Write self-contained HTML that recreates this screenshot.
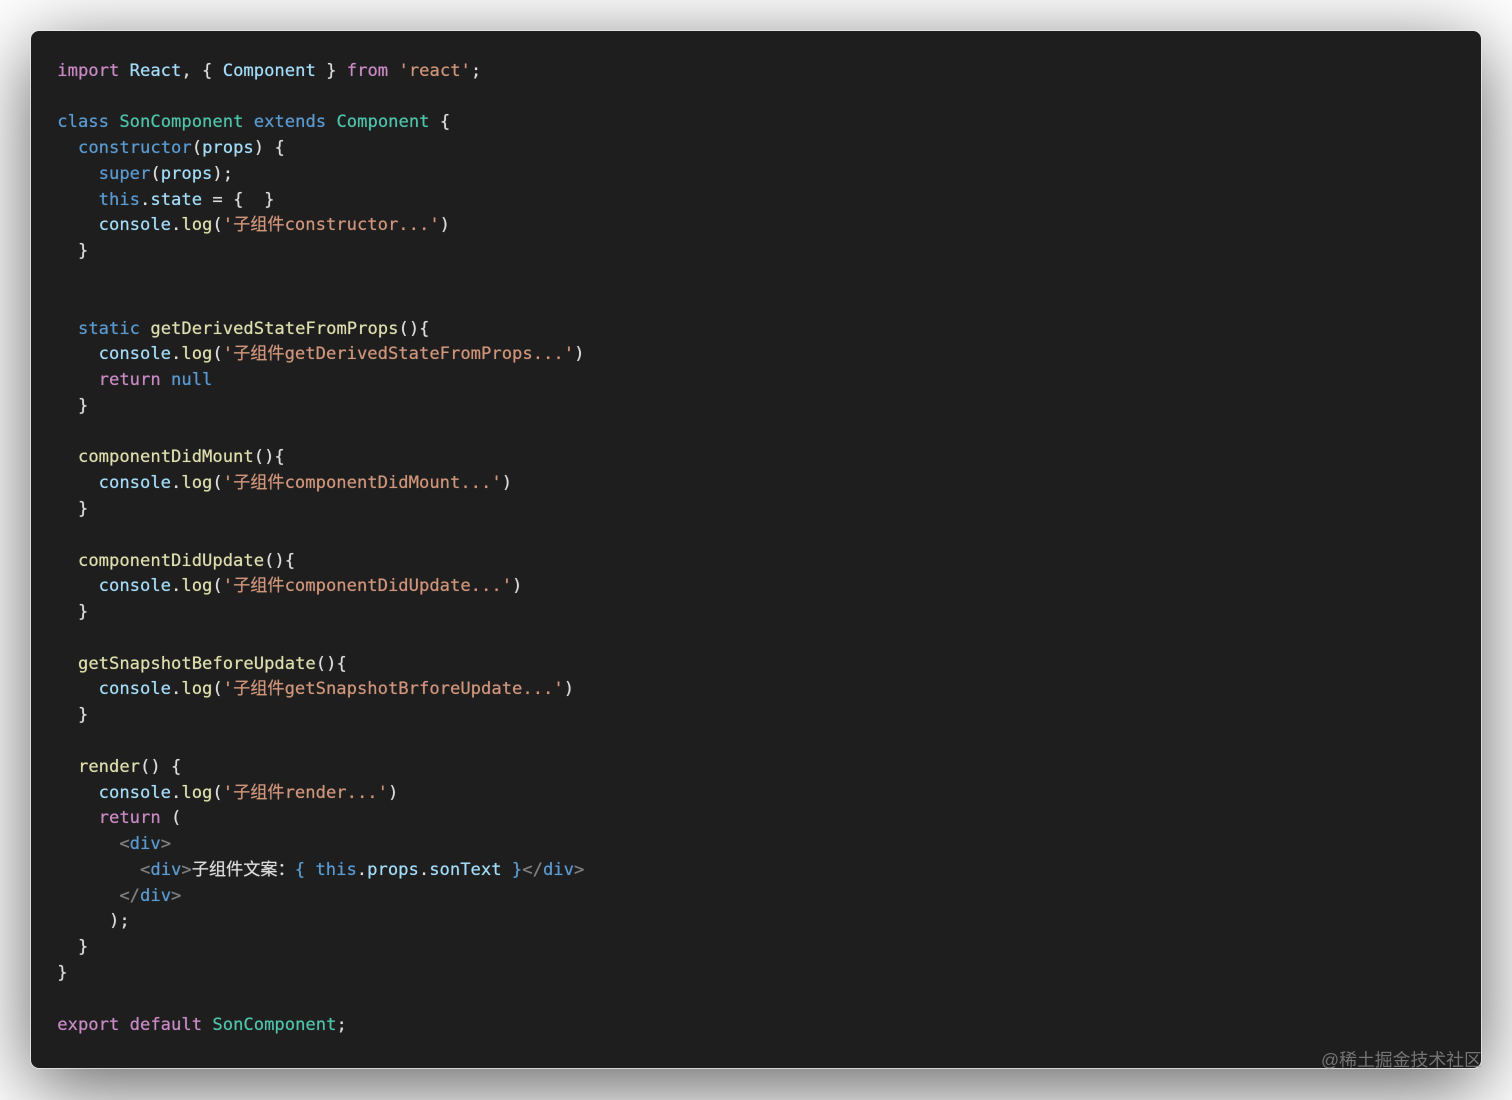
<!DOCTYPE html>
<html lang="zh-CN">
<head>
<meta charset="utf-8">
<title>SonComponent</title>
<style>
html,body{margin:0;padding:0;width:1512px;height:1100px;overflow:hidden;background:#fff;}
#win{position:absolute;left:31px;top:31px;width:1449.5px;height:1037px;background:#1e1e1e;border-radius:8px;box-shadow:0 0 0 1px rgba(235,235,235,.75),0 18px 80px rgba(0,0,0,.64);}
pre{position:absolute;left:57.3px;top:58.7px;margin:0;font-family:"DejaVu Sans Mono","Noto Sans CJK SC",monospace;font-size:17.18px;line-height:25.78px;color:#dcdcdc;white-space:pre;text-shadow:0 0 .6px currentColor;filter:blur(.25px);}
.k{color:#c98ac4}.b{color:#5a9ad0}.t{color:#4ec3aa}.v{color:#a4dcf8}.f{color:#dedeae}.s{color:#cf957b}.g{color:#808080}
#wm{position:absolute;left:1321px;top:1048px;font-family:"Liberation Sans","Noto Sans CJK SC",sans-serif;font-size:17.85px;line-height:24px;color:rgba(150,150,150,.72);white-space:nowrap;}
</style>
</head>
<body>
<div id="win"></div>
<pre><span class="k">import</span> <span class="v">React</span>, { <span class="v">Component</span> } <span class="k">from</span> <span class="s">'react'</span>;

<span class="b">class</span> <span class="t">SonComponent</span> <span class="b">extends</span> <span class="t">Component</span> {
  <span class="b">constructor</span>(<span class="v">props</span>) {
    <span class="b">super</span>(<span class="v">props</span>);
    <span class="b">this</span>.<span class="v">state</span> = {  }
    <span class="v">console</span>.<span class="f">log</span>(<span class="s">'子组件constructor...'</span>)
  }


  <span class="b">static</span> <span class="f">getDerivedStateFromProps</span>(){
    <span class="v">console</span>.<span class="f">log</span>(<span class="s">'子组件getDerivedStateFromProps...'</span>)
    <span class="k">return</span> <span class="b">null</span>
  }

  <span class="f">componentDidMount</span>(){
    <span class="v">console</span>.<span class="f">log</span>(<span class="s">'子组件componentDidMount...'</span>)
  }

  <span class="f">componentDidUpdate</span>(){
    <span class="v">console</span>.<span class="f">log</span>(<span class="s">'子组件componentDidUpdate...'</span>)
  }

  <span class="f">getSnapshotBeforeUpdate</span>(){
    <span class="v">console</span>.<span class="f">log</span>(<span class="s">'子组件getSnapshotBrforeUpdate...'</span>)
  }

  <span class="f">render</span>() {
    <span class="v">console</span>.<span class="f">log</span>(<span class="s">'子组件render...'</span>)
    <span class="k">return</span> (
      <span class="g">&lt;</span><span class="b">div</span><span class="g">&gt;</span>
        <span class="g">&lt;</span><span class="b">div</span><span class="g">&gt;</span>子组件文案：<span class="b">{</span> <span class="b">this</span>.<span class="v">props</span>.<span class="v">sonText</span> <span class="b">}</span><span class="g">&lt;/</span><span class="b">div</span><span class="g">&gt;</span>
      <span class="g">&lt;/</span><span class="b">div</span><span class="g">&gt;</span>
     );
  }
}

<span class="k">export</span> <span class="k">default</span> <span class="t">SonComponent</span>;</pre>
<div id="wm">@稀土掘金技术社区</div>
</body>
</html>
